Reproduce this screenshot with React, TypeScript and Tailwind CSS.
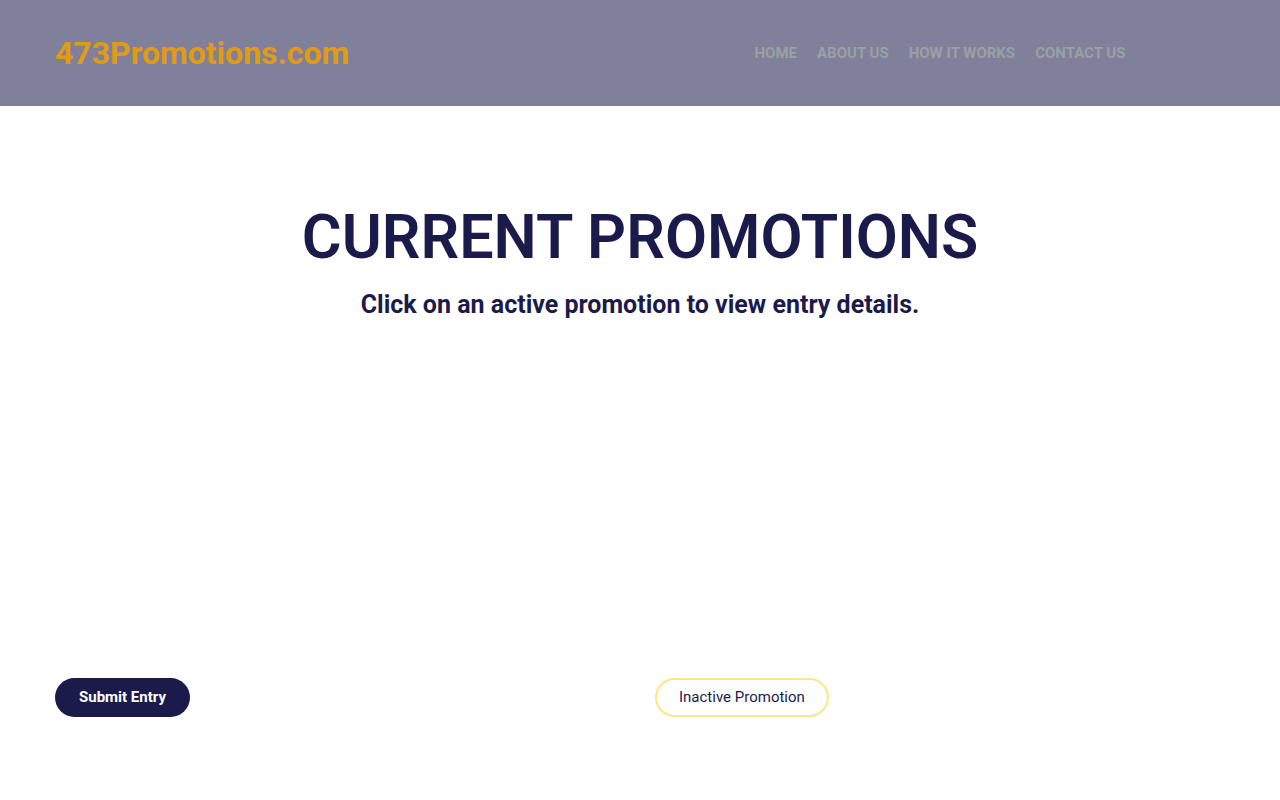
const links = ["Home", "About us", "How it works", "Contact us"];

export default function App() {
  return (
    <div className="min-h-screen bg-white font-['Roboto',sans-serif] text-[#1b1b4b]">
      <header className="bg-[#80809a]">
        <div className="mx-auto grid max-w-[1200px] grid-cols-2 items-center px-[15px] py-7">
          <a href="#" className="text-[32px] leading-[50px] font-bold text-[#e09b13]">
            473Promotions.com
          </a>
          <nav className="flex justify-center gap-5 pl-[15px]">
            {links.map((label) => (
              <a key={label} href="#" className="text-[15px] leading-5 font-bold whitespace-nowrap text-[#98a1a6] uppercase">
                {label}
              </a>
            ))}
          </nav>
        </div>
      </header>
      <main className="mx-auto max-w-[1200px] px-[15px]">
        <section className="pt-[100px] text-center">
          <h1 className="text-[61px] leading-[62px] font-semibold uppercase">Current Promotions</h1>
          <h2 className="mt-[22px] text-[25px] leading-[30px] font-bold">
            Click on an active promotion to view entry details.
          </h2>
        </section>
        <section className="mt-[358px] grid grid-cols-2 gap-[30px] pb-[82px]">
          <div>
            <button type="button" className="h-[39px] rounded-full bg-[#1b1b4b] px-6 text-[15px] font-bold text-white">
              Submit Entry
            </button>
          </div>
          <div>
            <button type="button" className="h-[39px] rounded-full border-2 border-[#ffe58a] px-[22px] text-[15px]">
              Inactive Promotion
            </button>
          </div>
        </section>
      </main>
    </div>
  );
}
